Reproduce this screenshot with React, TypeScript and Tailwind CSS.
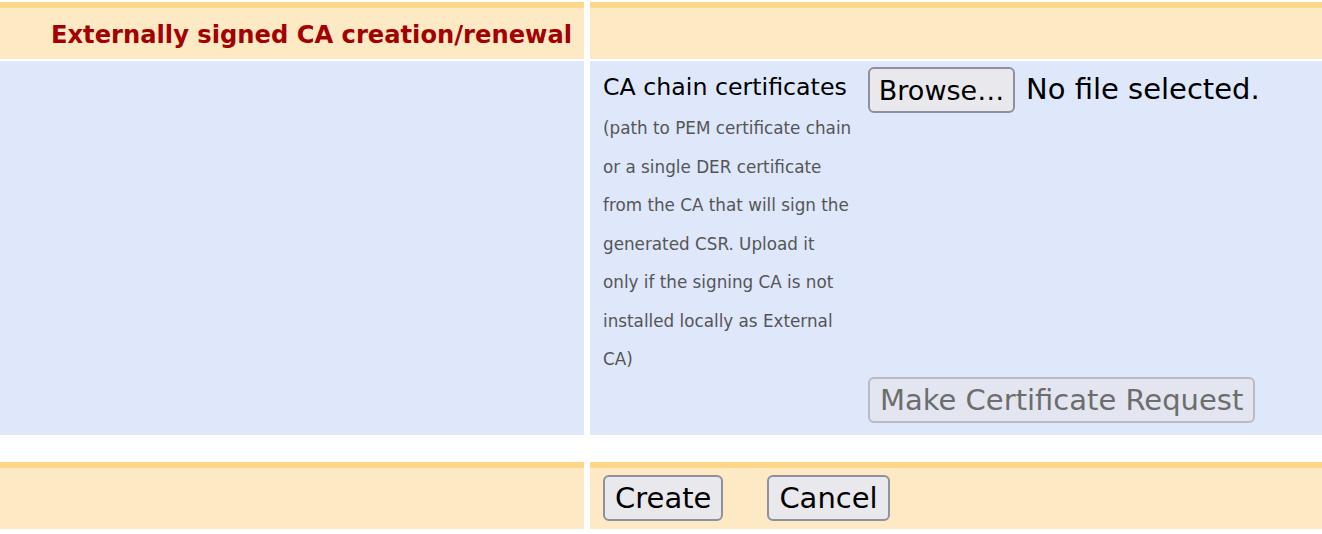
import React from "react"

const font = { fontFamily: '"DejaVu Sans", Verdana, sans-serif' }

const btn =
    "h-[46px] px-[10px] rounded-[6px] border-2 border-[#8f8f9d] bg-[#e9e9ed] text-[29px] leading-none text-black"

export default function App() {
    return (
        <div className="w-[1322px] h-[534px] bg-white pt-[2px] overflow-hidden" style={font}>
            {/* header row */}
            <div className="grid grid-cols-[584px_1fr] gap-x-[6px]">
                <div className="h-[57px] border-t-[6px] border-[#fdd68a] bg-[#fee9c5] flex items-center justify-end pr-[12px] pt-[3px]">
                    <span className="text-[24.2px] font-bold text-[#a30000]">Externally signed CA creation/renewal</span>
                </div>
                <div className="h-[57px] border-t-[6px] border-[#fdd68a] bg-[#fee9c5]" />
            </div>

            {/* certificate row */}
            <div className="grid grid-cols-[584px_1fr] gap-x-[6px] mt-[2px]">
                <div className="h-[374px] bg-[#dfe7fb]" />
                <div className="h-[374px] bg-[#dfe7fb] flex pl-[13px]">
                    <div className="w-[265px] pt-[11px]">
                        <div className="text-[23.7px] leading-[30px] text-black">CA chain certificates</div>
                        <div className="w-[250px] mt-[7px] text-[16.8px] leading-[38.5px] text-[#555]">
                            (path to PEM certificate chain or a single DER certificate from the CA that will sign the generated CSR. Upload it only if the signing CA is not installed locally as External CA)
                        </div>
                    </div>
                    <div className="flex flex-col justify-between pt-[6px] pb-[12px]">
                        <div className="flex items-center gap-[11px]">
                            <button className="h-[46px] w-[147px] rounded-[6px] border-2 border-[#8f8f9d] bg-[#e9e9ed] text-[27px] leading-none text-black">
                                Browse…
                            </button>
                            <span className="text-[29px] text-black">No file selected.</span>
                        </div>
                        <div>
                            <button
                                disabled
                                className="h-[46px] px-[10px] rounded-[6px] border-2 border-[#b8bac6] bg-[#e3e6f1] text-[29px] leading-none text-[#6d6d6d]"
                            >
                                Make Certificate Request
                            </button>
                        </div>
                    </div>
                </div>
            </div>

            {/* action row */}
            <div className="grid grid-cols-[584px_1fr] gap-x-[6px] mt-[27px]">
                <div className="h-[67px] border-t-[6px] border-[#fdd68a] bg-[#fee9c5]" />
                <div className="h-[67px] border-t-[6px] border-[#fdd68a] bg-[#fee9c5] flex items-start gap-[44px] pl-[13px] pt-[7px]">
                    <button className={btn}>Create</button>
                    <button className={btn}>Cancel</button>
                </div>
            </div>
        </div>
    )
}
